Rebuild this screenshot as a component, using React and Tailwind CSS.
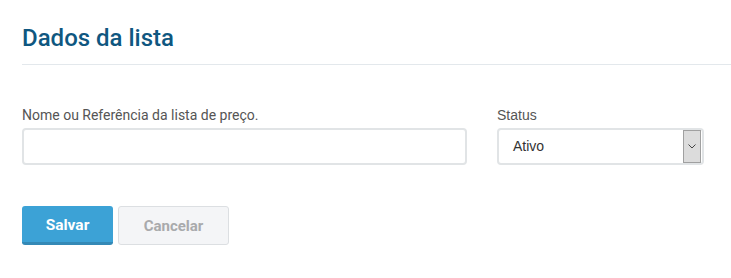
import React from "react";

export default function App() {
  return (
    <div className="w-[731px] h-[278px] bg-white pl-[22px] pt-[24px]" style={{ fontFamily: "Roboto, sans-serif" }}>
      <h2 className="text-[24px] font-medium text-[#0f5780] leading-[28px]">Dados da lista</h2>
      <div className="mt-[12px] h-px bg-[#e3e8ec]" />
      <div className="mt-[40px] flex">
        <div className="w-[445px]">
          <label className="block text-[14px] text-[#555] leading-[20px]">Nome ou Referência da lista de preço.</label>
          <input className="mt-[3px] w-[445px] h-[37px] border-2 border-[#e1e4e6] rounded-[4px] outline-none px-3" />
        </div>
        <div className="ml-[30px] w-[207px]">
          <label className="block text-[14px] text-[#555] leading-[20px]" style={{ fontFamily: '"Liberation Sans", Arial, sans-serif' }}>Status</label>
          <div className="mt-[3px] h-[37px] border-2 border-[#e1e4e6] rounded-[4px] flex items-center justify-between pl-[14px] pr-[1px]">
            <span className="text-[14px] text-[#333]" style={{ fontFamily: '"Liberation Sans", Arial, sans-serif' }}>Ativo</span>
            <div className="w-[18px] h-[33px] bg-[#dcdcdc] border border-[#a0a0a0] flex items-center justify-center">
              <svg width="8" height="5" viewBox="0 0 8 5"><path d="M0.5 0.5 L4 4 L7.5 0.5" fill="none" stroke="#444" strokeWidth="1" /></svg>
            </div>
          </div>
        </div>
      </div>
      <div className="mt-[41px] flex gap-[5px]">
        <button className="w-[91px] h-[39px] pt-[3px] bg-[#3ca2d6] border-b-[3px] border-[#3489b6] rounded-[3px] text-white text-[15.5px] font-bold">Salvar</button>
        <button className="w-[111px] h-[39px] pt-[1px] bg-[#f4f5f7] border border-[#dcdfe2] rounded-[3px] text-[#a9aaac] text-[15px] font-bold">Cancelar</button>
      </div>
    </div>
  );
}
